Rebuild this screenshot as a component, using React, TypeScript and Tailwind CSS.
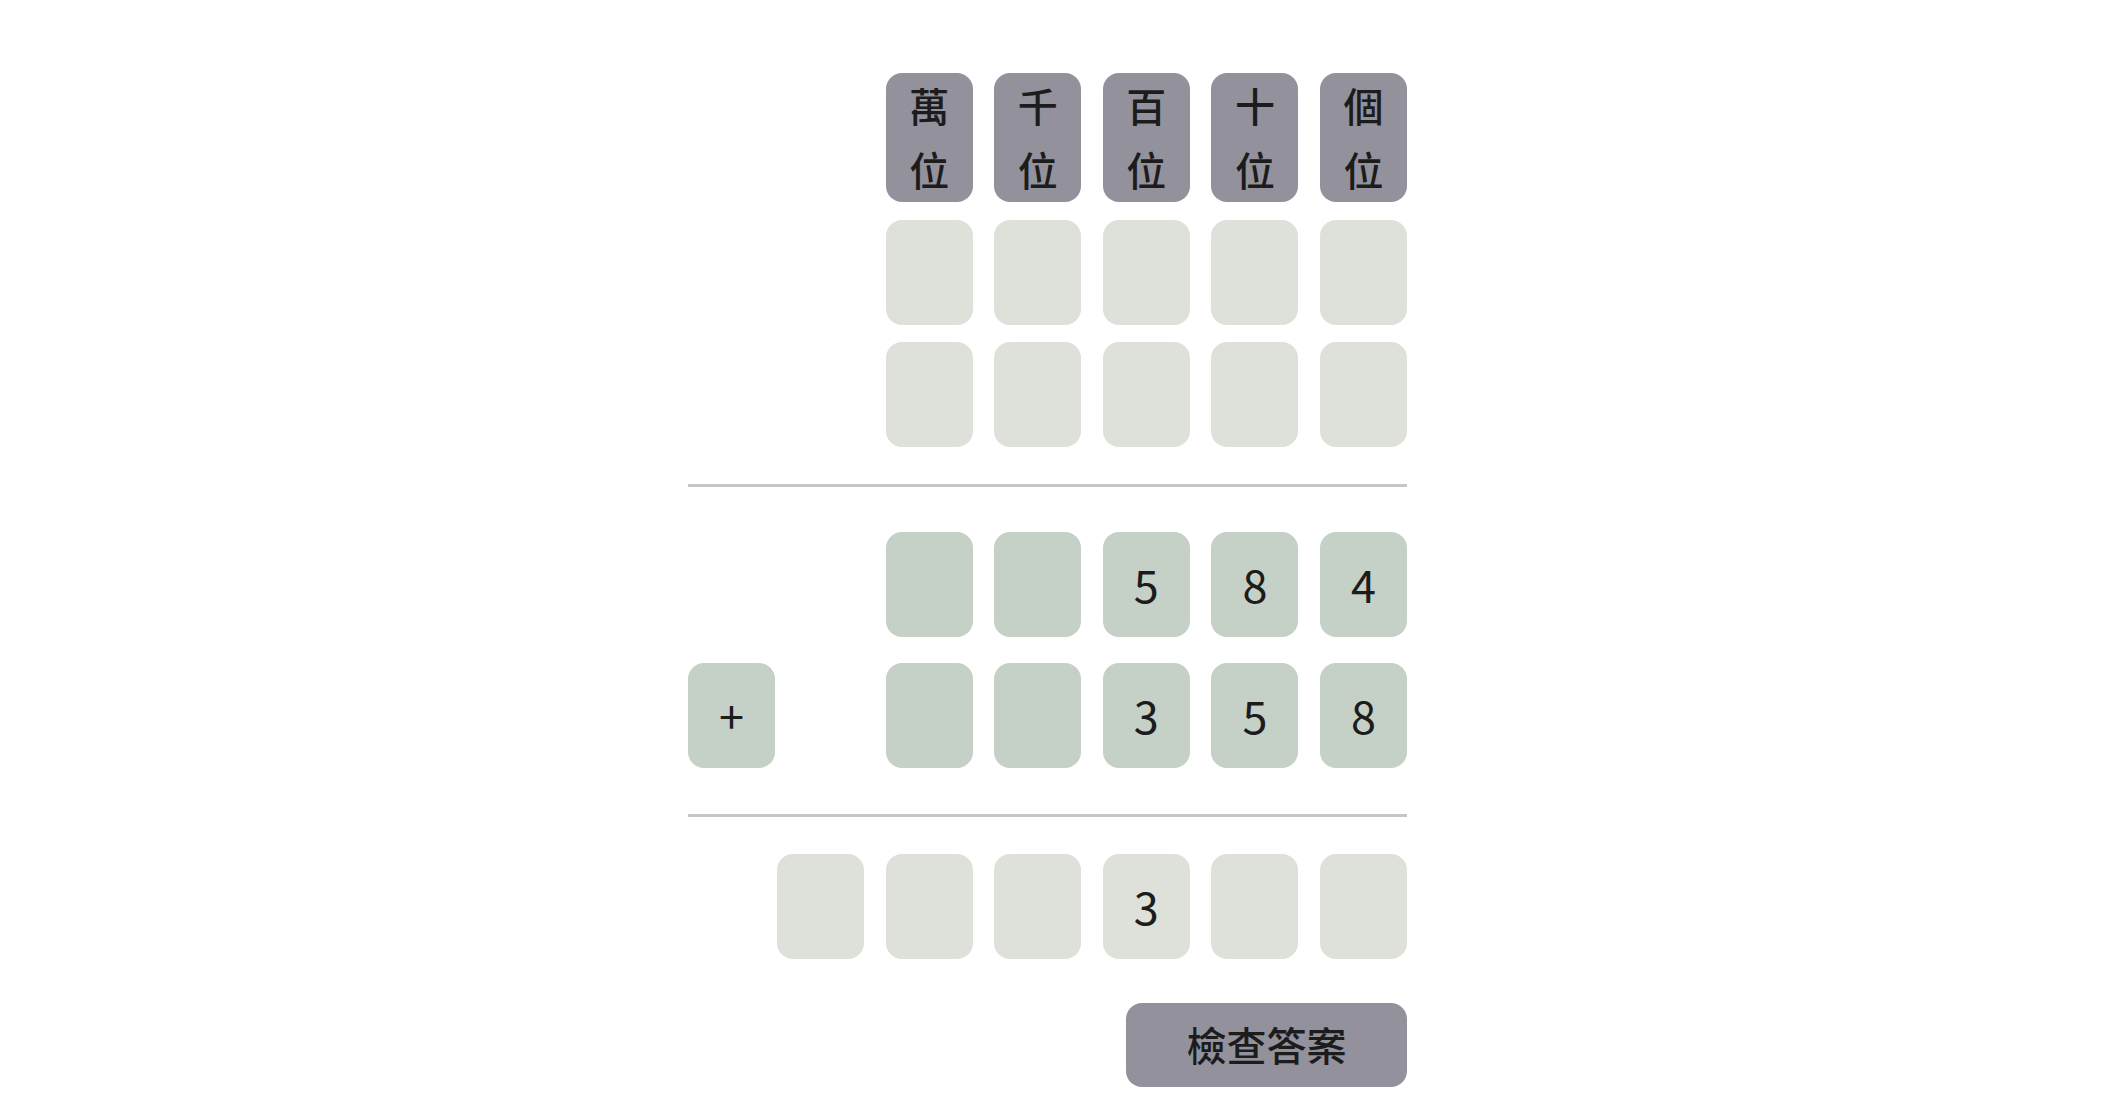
import React from "react";

type Tone = "label" | "blank" | "given";

const toneClass: Record<Tone, string> = {
  label: "bg-[#93929c]",
  blank: "bg-[#dee0da]",
  given: "bg-[#c5d0c6]",
};

const Cell = ({ tone, children }: { tone: Tone; children?: React.ReactNode }) => (
  <div
    className={`flex h-[105px] w-[87px] items-center justify-center rounded-2xl text-[45px] leading-none text-[#1c1c1c] ${toneClass[tone]}`}
  >
    <span className="-mt-[3px]">{children}</span>
  </div>
);

const places = ["萬", "千", "百", "十", "個"];

const Row = ({ cells, tone }: { cells: (string | null)[]; tone: Tone }) => (
  <div className="flex justify-end gap-[21.6px]">
    {cells.map((c, i) => (
      <Cell key={i} tone={tone}>
        {c}
      </Cell>
    ))}
  </div>
);

export default function App() {
  return (
    <div className="min-h-screen bg-white font-['Noto_Sans_CJK_TC','Noto_Sans',sans-serif]">
      <div className="mx-auto flex w-[752px] flex-col pr-[33px] pt-[73px]">
        {/* place value labels */}
        <div className="flex justify-end gap-[21.6px]">
          {places.map((p) => (
            <div
              key={p}
              className="flex h-[129px] w-[87px] flex-col items-center justify-center rounded-2xl bg-[#93929c] pb-[2px] text-[40px] font-medium leading-[64px] text-[#1c1c1c]"
            >
              <span>{p}</span>
              <span>位</span>
            </div>
          ))}
        </div>

        {/* carry rows */}
        <div className="mt-[18px] flex flex-col gap-[17px]">
          <Row tone="blank" cells={[null, null, null, null, null]} />
          <Row tone="blank" cells={[null, null, null, null, null]} />
        </div>

        <div className="mt-[37px] h-[3px] bg-[#c6c6c6]" />

        {/* operands */}
        <div className="mt-[45px]">
          <Row tone="given" cells={[null, null, "5", "8", "4"]} />
        </div>
        <div className="mt-[26px] flex justify-between">
          <Cell tone="given">+</Cell>
          <Row tone="given" cells={[null, null, "3", "5", "8"]} />
        </div>

        <div className="mt-[46px] h-[3px] bg-[#c6c6c6]" />

        {/* answer */}
        <div className="mt-[37px]">
          <Row tone="blank" cells={[null, null, null, "3", null, null]} />
        </div>

        <div className="mt-[44px] flex justify-end">
          <button className="h-[84px] w-[281px] rounded-2xl bg-[#93929c] pb-[2px] text-[40px] font-medium text-[#1c1c1c]">
            檢查答案
          </button>
        </div>
      </div>
    </div>
  );
}
